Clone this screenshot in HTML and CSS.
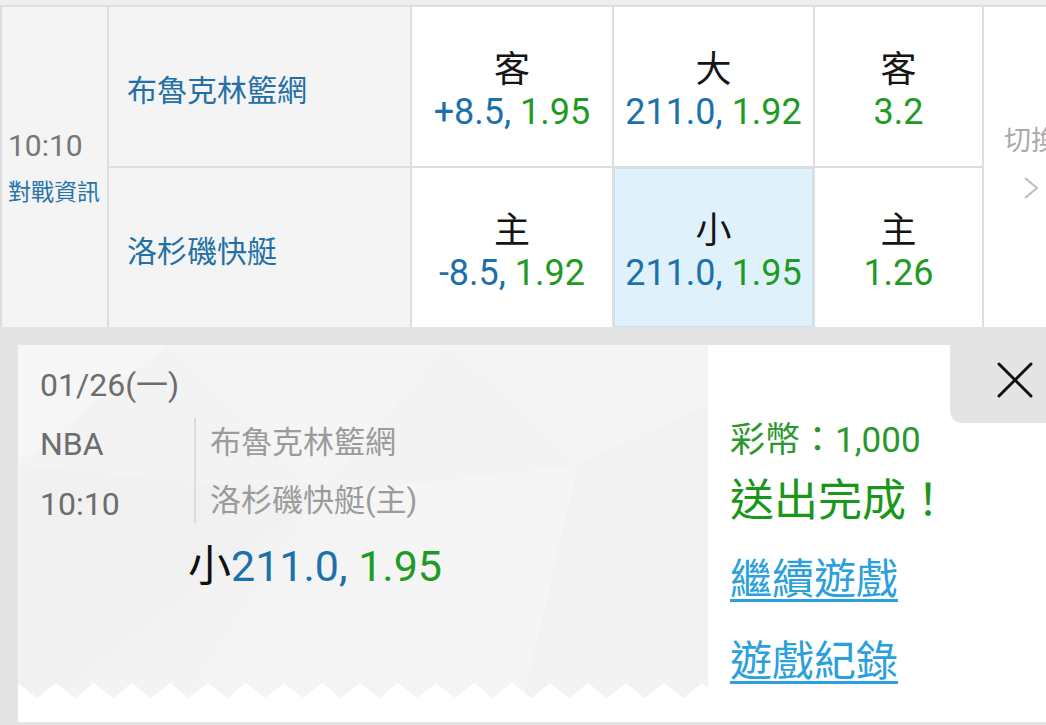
FILE: index.html
```html
<!DOCTYPE html>
<html lang="zh-Hant">
<head>
<meta charset="utf-8">
<title>投注完成</title>
<link rel="stylesheet" href="styles.css">
</head>
<body>
<div class="top-strip"></div>
<div class="board">
  <div class="cell time">
    <div class="clock">10:10</div>
    <div class="info">對戰資訊</div>
  </div>
  <div class="cell team">布魯克林籃網</div>
  <div class="cell odds"><div class="lbl">客</div><div class="num"><span class="b">+8.5,</span> <span class="g">1.95</span></div></div>
  <div class="cell odds"><div class="lbl">大</div><div class="num"><span class="b">211.0,</span> <span class="g">1.92</span></div></div>
  <div class="cell odds"><div class="lbl">客</div><div class="num"><span class="g">3.2</span></div></div>
  <div class="cell switch">
    <div class="sw-text">切換</div>
    <svg class="chev" width="16" height="22" viewBox="0 0 16 22"><polyline points="2,1 14,11 2,21" fill="none" stroke="#bdbdbd" stroke-width="2"/></svg>
  </div>
  <div class="cell team">洛杉磯快艇</div>
  <div class="cell odds"><div class="lbl">主</div><div class="num"><span class="b">-8.5,</span> <span class="g">1.92</span></div></div>
  <div class="cell odds sel"><div class="lbl">小</div><div class="num"><span class="b">211.0,</span> <span class="g">1.95</span></div></div>
  <div class="cell odds"><div class="lbl">主</div><div class="num"><span class="g">1.26</span></div></div>
</div>
<div class="band"></div>
<div class="result">
  <div class="sheet">
    <div class="ticket">
      <div class="date">01/26(一)</div>
      <div class="match">
        <div class="meta">
          <div>NBA</div>
          <div>10:10</div>
        </div>
        <div class="divider"></div>
        <div class="teams">
          <div>布魯克林籃網</div>
          <div>洛杉磯快艇(主)</div>
        </div>
      </div>
      <div class="bet"><span class="k">小</span><span class="b">211.0,</span> <span class="g">1.95</span></div>
    </div>
    <div class="summary">
      <div class="coins">彩幣：1,000</div>
      <div class="done">送出完成！</div>
      <a class="link first" href="#">繼續遊戲</a>
      <a class="link second" href="#">遊戲紀錄</a>
    </div>
    <div class="close">
      <svg width="36" height="36" viewBox="0 0 36 36"><path d="M2 2 L34 34 M34 2 L2 34" stroke="#111" stroke-width="3" stroke-linecap="round" fill="none"/></svg>
    </div>
  </div>
</div>
</body>
</html>
```

FILE: styles.css
```css
html, body {
  margin: 0;
  padding: 0;
}
body {
  width: 1046px;
  height: 725px;
  overflow: hidden;
  background: #e4e4e4;
  font-family: Roboto, "Noto Sans CJK TC", sans-serif;
}
.top-strip {
  height: 5px;
  background: #efefef;
}
.board {
  display: grid;
  grid-template-columns: 105px 301px 200px 199px 167px 94px;
  grid-template-rows: 159px 159px;
  gap: 2px;
  padding: 2px 0 0 2px;
  width: 1078px;
  background: #dedede;
}
.cell {
  background: #f4f4f4;
}
.time {
  grid-row: 1 / 3;
  display: flex;
  flex-direction: column;
  justify-content: center;
  padding: 0 0 0 6px;
}
.clock {
  font-size: 30px;
  line-height: 40px;
  color: #777;
}
.info {
  font-size: 23px;
  line-height: 30px;
  margin-top: 12px;
  color: #2a74aa;
}
.team {
  display: flex;
  align-items: center;
  padding: 3px 0 0 18px;
  font-size: 30px;
  color: #2270a5;
}
.odds {
  background: #fff;
  display: flex;
  flex-direction: column;
  align-items: center;
  justify-content: center;
  padding-top: 9px;
  font-size: 36px;
  line-height: 42px;
}
.odds.sel {
  background: #dff2fc;
  box-shadow: inset 0 0 0 1px #c6e3f2;
}
.lbl {
  color: #151515;
}
.b {
  color: #1d71ab;
}
.g {
  color: #1f9a24;
}
.switch {
  grid-row: 1 / 3;
  grid-column: 6;
  background: #fff;
  display: flex;
  flex-direction: column;
  align-items: center;
  justify-content: center;
  padding-bottom: 11px;
}
.sw-text {
  font-size: 27px;
  line-height: 34px;
  color: #aaa;
}
.chev {
  margin-top: 19px;
  display: block;
}
.band {
  height: 18px;
  background: #e4e4e4;
}
.result {
  padding: 0 0 3px 18px;
  background: #e4e4e4;
}
.sheet {
  display: flex;
  height: 377px;
  background: #fff;
}
.ticket {
  flex-shrink: 0;
  width: 690px;
  height: 353px;
  box-sizing: border-box;
  padding: 20px 0 0 22px;
  background: url("data:image/svg+xml,<svg xmlns='http://www.w3.org/2000/svg' width='690' height='353'><rect width='690' height='353' fill='%23f3f3f3'/><polygon points='0,0 150,0 0,120' fill='%23f6f6f6'/><polygon points='150,0 430,0 300,150' fill='%23f5f5f5'/><polygon points='430,0 690,0 690,60 560,120' fill='%23f4f4f4'/><polygon points='0,120 300,150 0,380' fill='%23f1f1f1'/><polygon points='300,150 560,120 500,380' fill='%23f5f5f5'/><polygon points='560,120 690,60 690,380 500,380' fill='%23f2f2f2'/><polygon points='300,150 500,380 150,380' fill='%23f4f4f4'/><defs><pattern id='z' width='38' height='15' x='0' y='338' patternUnits='userSpaceOnUse'><path d='M0,0L19,15L0,15ZM38,0L19,15L38,15Z' fill='%23fff'/></pattern></defs><rect x='0' y='338' width='690' height='15' fill='url(%23z)'/></svg>") no-repeat;
}
.date {
  font-size: 32px;
  line-height: 40px;
  color: #6d6d6d;
}
.match {
  display: flex;
  margin-top: 9px;
}
.meta {
  width: 154px;
  font-size: 32px;
  line-height: 60px;
  color: #6d6d6d;
}
.divider {
  width: 2px;
  height: 105px;
  margin-top: 4px;
  background: #dcdcdc;
}
.teams {
  padding-left: 14px;
  font-size: 31px;
  line-height: 58px;
  color: #9b9b9b;
}
.bet {
  margin: 7px 0 0 148px;
  font-size: 43px;
  line-height: 50px;
}
.bet .k {
  color: #111;
}
.summary {
  width: 242px;
  flex-shrink: 0;
  box-sizing: border-box;
  padding: 74px 0 0 22px;
}
.coins {
  font-size: 35px;
  line-height: 44px;
  color: #2b982b;
}
.done {
  margin-top: 10px;
  font-size: 44px;
  line-height: 56px;
  color: #1a971a;
}
.link {
  display: block;
  font-size: 42px;
  line-height: 56px;
  color: #2aa0dc;
  text-decoration: underline;
  text-decoration-thickness: 3px;
  text-underline-offset: 5px;
}
.link.first {
  margin-top: 23px;
}
.link.second {
  margin-top: 26px;
}
.close {
  flex-shrink: 0;
  width: 96px;
  height: 78px;
  box-sizing: border-box;
  padding: 17px 0 0 47px;
  background: #e4e4e4;
  border-bottom-left-radius: 12px;
}
.close svg {
  display: block;
}
```
